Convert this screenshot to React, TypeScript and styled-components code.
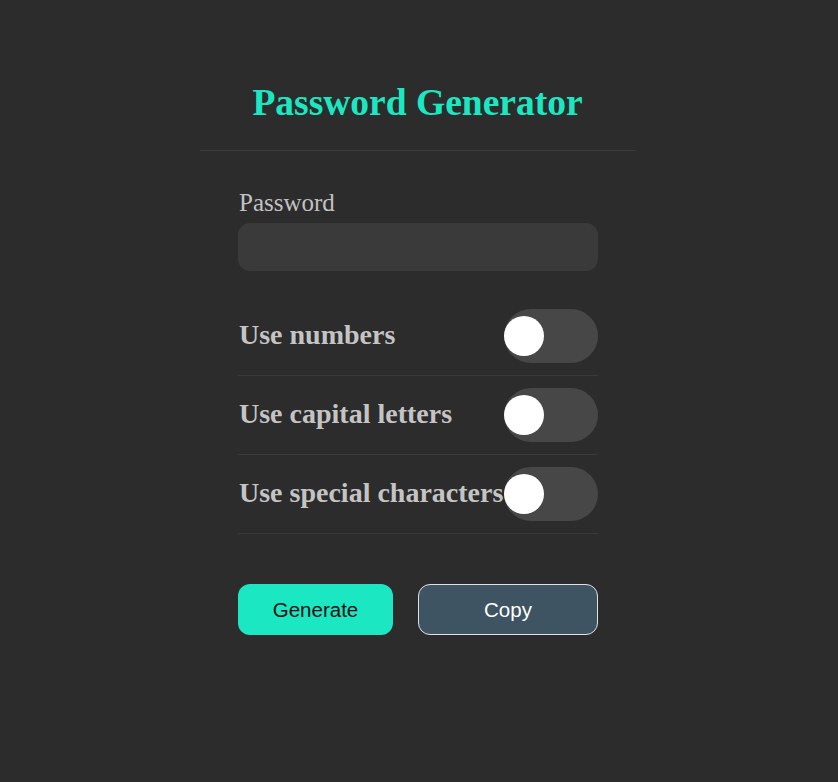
import React, { useState } from "react";
import styled, { createGlobalStyle } from "styled-components";

const GlobalStyle = createGlobalStyle`
  html, body {
    margin: 0;
    padding: 0;
    background: #2c2c2c;
  }
  body {
    font-family: "Liberation Serif", "Times New Roman", serif;
  }
  * { box-sizing: border-box; }
`;

const Page = styled.div`
  min-height: 782px;
  display: flex;
  justify-content: center;
  padding-right: 3px;
  background: #2c2c2c;
`;

const Card = styled.div`
  width: 435px;
  display: flex;
  flex-direction: column;
`;

const Header = styled.header`
  padding: 80px 0 25px;
  border-bottom: 1px solid #3b3b3b;
  text-align: center;
`;

const Title = styled.h1`
  margin: 0;
  font-family: "Liberation Serif", "Times New Roman", serif;
  font-size: 37.5px;
  line-height: 45px;
  font-weight: 700;
  color: #1be7c2;
`;

const Body = styled.div`
  padding: 37px 37px 0 38px;
  display: flex;
  flex-direction: column;
`;

const Label = styled.label`
  font-size: 25px;
  line-height: 29px;
  color: #c2c2c2;
  padding-left: 1px;
`;

const PasswordField = styled.input`
  margin-top: 6px;
  height: 48px;
  width: 100%;
  border: none;
  outline: none;
  border-radius: 12px;
  background: #3a3a3a;
  color: #e0e0e0;
  font-size: 18px;
  padding: 0 14px;
  font-family: "Liberation Mono", monospace;
`;

const Options = styled.div`
  margin-top: 26px;
  display: flex;
  flex-direction: column;
`;

const OptionRow = styled.div`
  display: flex;
  align-items: center;
  justify-content: space-between;
  padding: 12px 0;
  border-bottom: 1px solid #3a3a3a;
`;

const OptionText = styled.span`
  font-size: 28px;
  line-height: 30px;
  font-weight: 700;
  color: #c4c4c4;
  white-space: nowrap;
  padding-left: 1px;
  margin-bottom: 2px;
`;

const Switch = styled.label<{ $on: boolean }>`
  position: relative;
  flex: 0 0 94px;
  width: 94px;
  height: 54px;
  border-radius: 27px;
  background: ${(p) => (p.$on ? "#1be7c2" : "#474747")};
  cursor: pointer;
  input {
    display: none;
  }
`;

const Knob = styled.span<{ $on: boolean }>`
  position: absolute;
  top: 7px;
  left: ${(p) => (p.$on ? "54px" : "0px")};
  width: 40px;
  height: 40px;
  border-radius: 50%;
  background: #ffffff;
  transition: left 0.2s;
`;

const Buttons = styled.div`
  margin-top: 50px;
  display: flex;
  gap: 25px;
`;

const Button = styled.button<{ $primary?: boolean }>`
  height: 51px;
  border-radius: 12px;
  font-family: "Liberation Sans", Arial, sans-serif;
  font-size: 20.5px;
  cursor: pointer;
  ${(p) =>
    p.$primary
      ? `
    width: 155px;
    flex: 0 0 155px;
    background: #1be7c2;
    color: #111;
    border: none;
  `
      : `
    flex: 1;
    background: #3e5462;
    color: #ffffff;
    border: 1px solid #e2e2e2;
  `}
`;

const options = ["Use numbers", "Use capital letters", "Use special characters"];

export default function App() {
  const [flags, setFlags] = useState([false, false, false]);
  const [pw, setPw] = useState("");

  const generate = () => {
    let chars = "abcdefghijklmnopqrstuvwxyz";
    if (flags[0]) chars += "0123456789";
    if (flags[1]) chars += "ABCDEFGHIJKLMNOPQRSTUVWXYZ";
    if (flags[2]) chars += "!@#$%^&*()-_=+";
    let out = "";
    for (let i = 0; i < 12; i++) out += chars[Math.floor(Math.random() * chars.length)];
    setPw(out);
  };

  return (
    <>
      <GlobalStyle />
      <Page>
        <Card>
          <Header>
            <Title>Password Generator</Title>
          </Header>
          <Body>
            <Label htmlFor="pw">Password</Label>
            <PasswordField id="pw" value={pw} readOnly />
            <Options>
              {options.map((o, i) => (
                <OptionRow key={o}>
                  <OptionText>{o}</OptionText>
                  <Switch $on={flags[i]}>
                    <input
                      type="checkbox"
                      checked={flags[i]}
                      onChange={() =>
                        setFlags((f) => f.map((v, j) => (j === i ? !v : v)))
                      }
                    />
                    <Knob $on={flags[i]} />
                  </Switch>
                </OptionRow>
              ))}
            </Options>
            <Buttons>
              <Button $primary onClick={generate}>Generate</Button>
              <Button onClick={() => navigator.clipboard?.writeText(pw)}>Copy</Button>
            </Buttons>
          </Body>
        </Card>
      </Page>
    </>
  );
}
